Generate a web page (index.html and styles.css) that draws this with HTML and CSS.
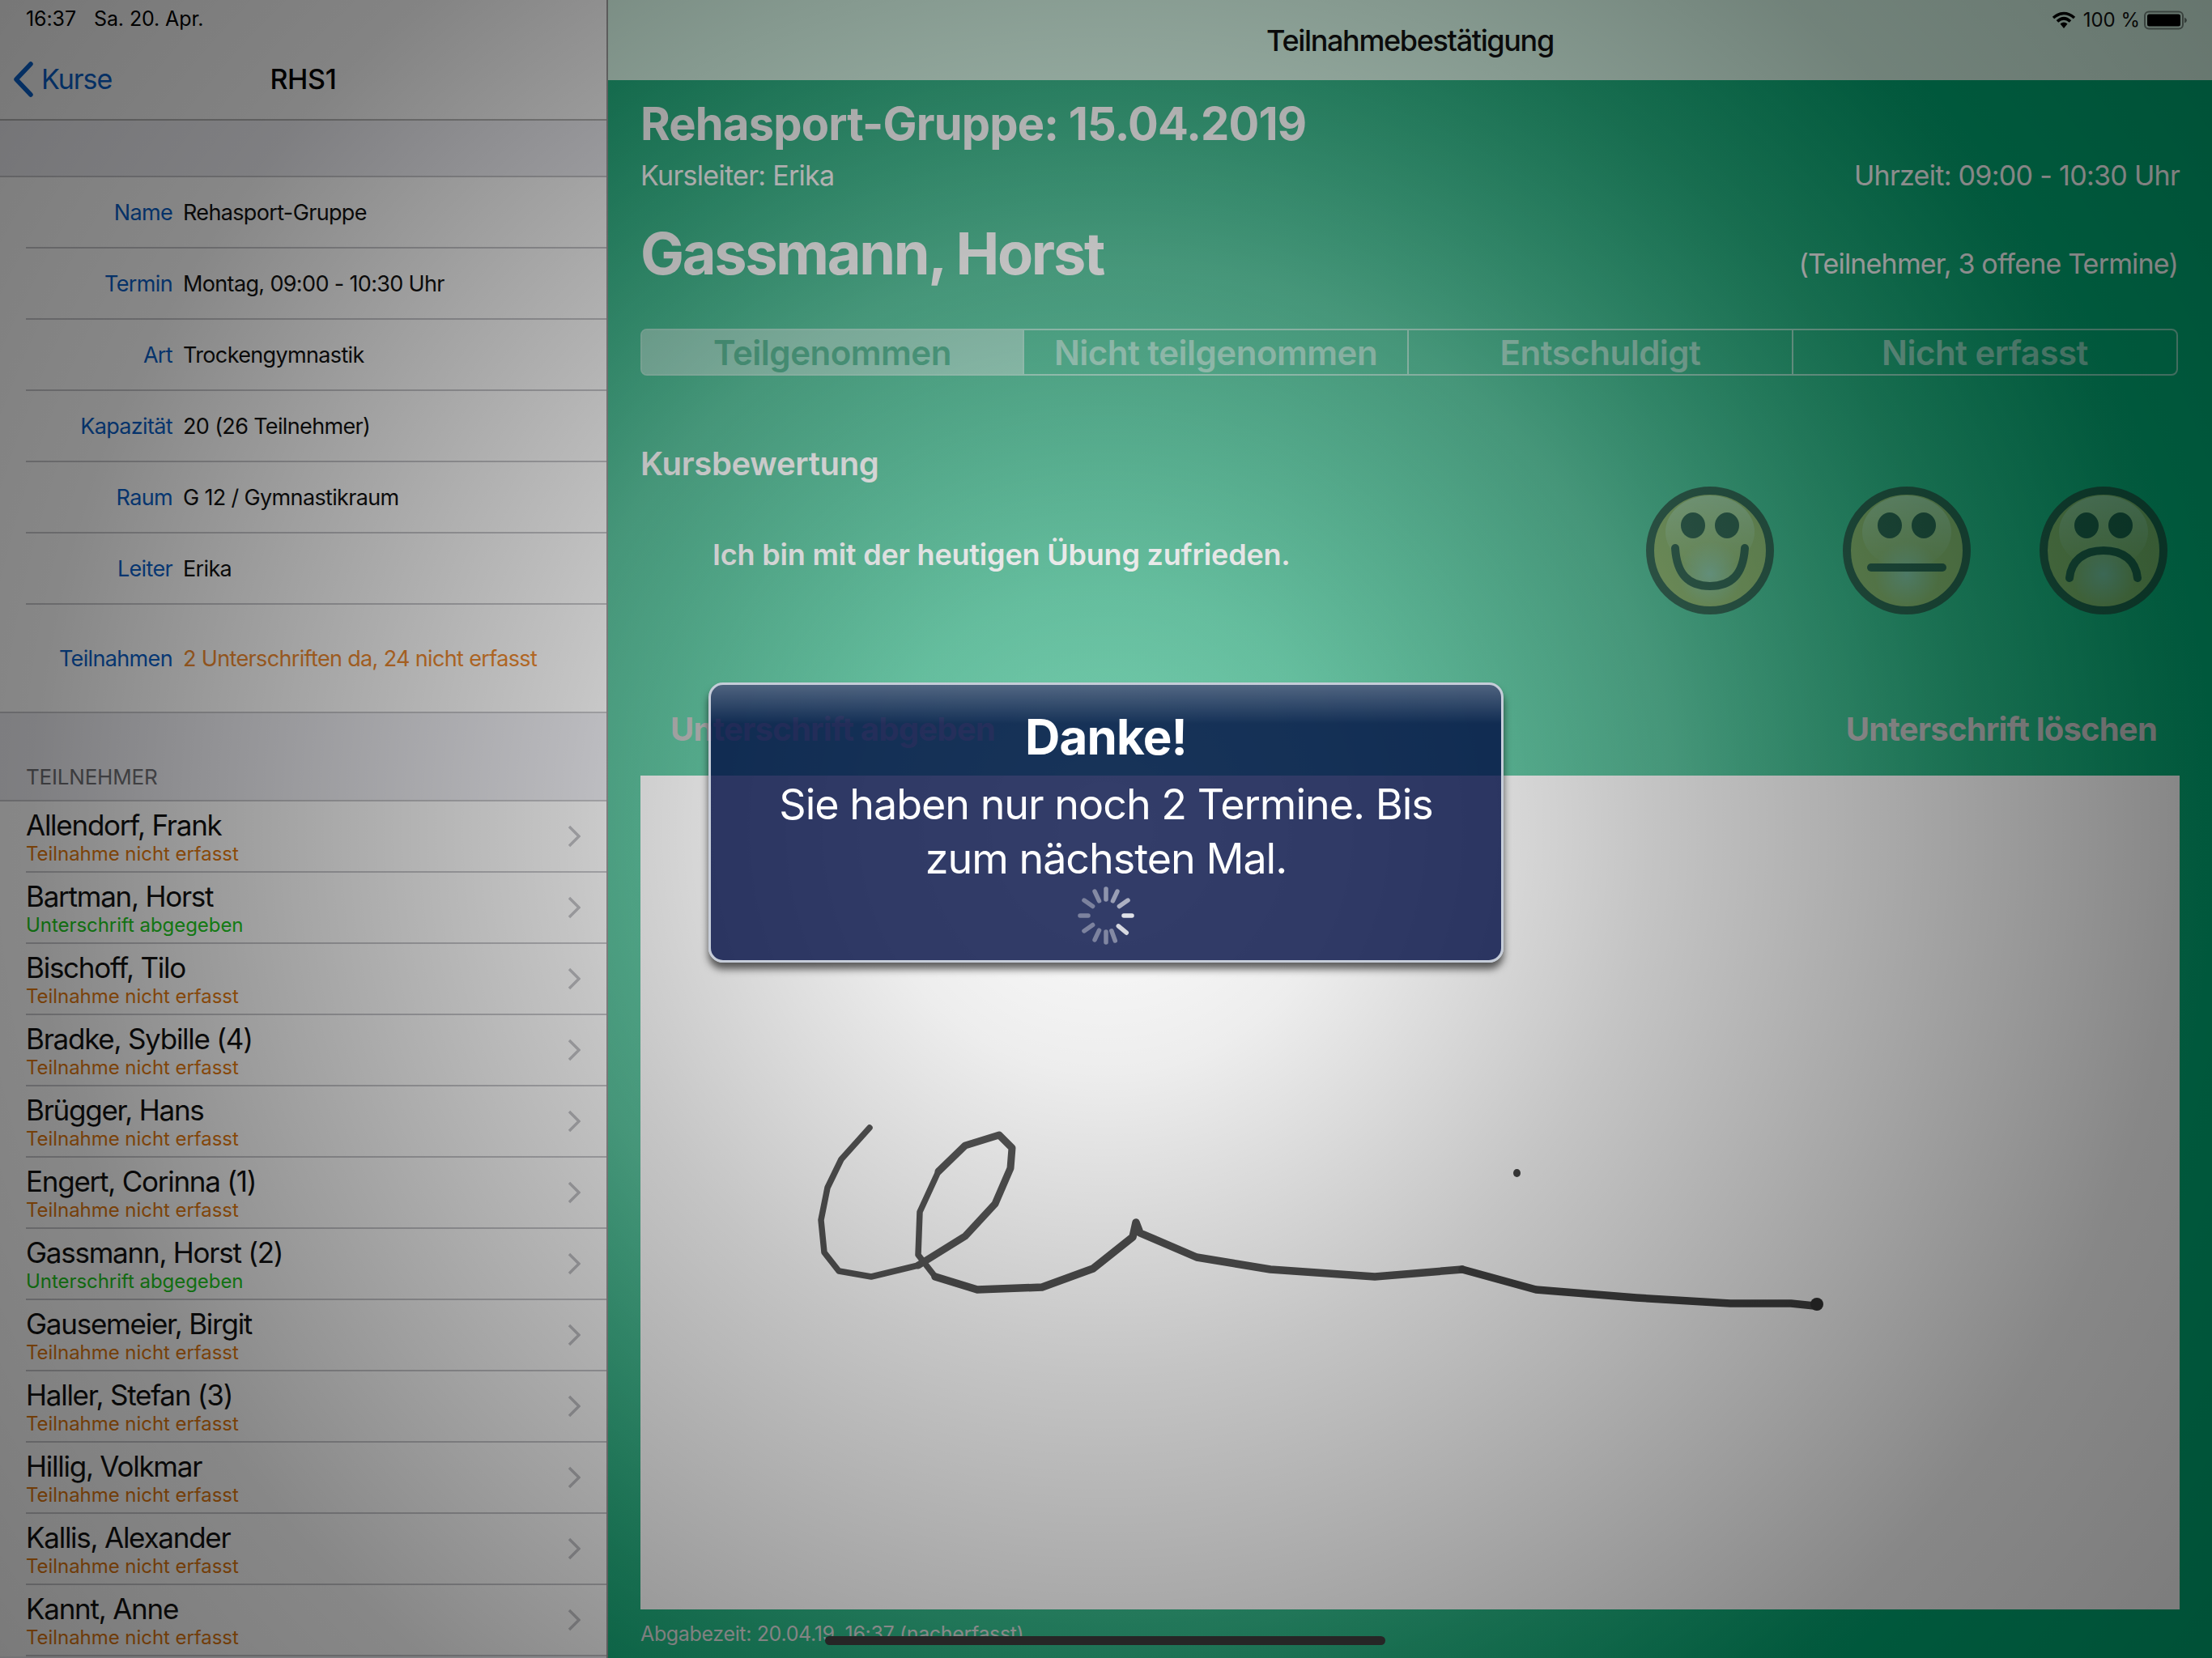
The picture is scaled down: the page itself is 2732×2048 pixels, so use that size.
FILE: index.html
```html
<!DOCTYPE html>
<html lang="de">
<head>
<meta charset="utf-8">
<title>Teilnahmebestätigung</title>
<link rel="stylesheet" href="styles.css">
</head>
<body>
<div class="app">
  <aside class="side">
    <div class="side-head">
      <div class="clock"><span>16:37</span><span>Sa. 20. Apr.</span></div>
      <div class="nav">
        <div class="back">
          <svg class="back-icon" width="26" height="44" viewBox="0 0 26 44"><path d="M22 3 L4 22 L22 41" fill="none" stroke="#0a60c8" stroke-width="5.5" stroke-linecap="round" stroke-linejoin="round"/></svg>
          <span>Kurse</span>
        </div>
        <div class="nav-title">RHS1</div>
      </div>
    </div>
    <div class="gap-a"></div>
    <div class="info">
      <div class="info-row"><span class="k">Name</span><span class="v">Rehasport-Gruppe</span></div>
      <div class="info-row"><span class="k">Termin</span><span class="v">Montag, 09:00 - 10:30 Uhr</span></div>
      <div class="info-row"><span class="k">Art</span><span class="v">Trockengymnastik</span></div>
      <div class="info-row"><span class="k">Kapazität</span><span class="v">20 (26 Teilnehmer)</span></div>
      <div class="info-row"><span class="k">Raum</span><span class="v">G 12 / Gymnastikraum</span></div>
      <div class="info-row"><span class="k">Leiter</span><span class="v">Erika</span></div>
      <div class="info-row tall"><span class="k">Teilnahmen</span><span class="v orange">2 Unterschriften da, 24 nicht erfasst</span></div>
    </div>
    <div class="sec-head">TEILNEHMER</div>
    <ul class="list">
      <li class="item"><div class="who"><div class="nm">Allendorf, Frank</div><div class="st o">Teilnahme nicht erfasst</div></div><svg class="chev" width="16" height="28" viewBox="0 0 16 28"><path d="M2 2 L14 14 L2 26" fill="none" stroke="#c4c4c8" stroke-width="3.4"/></svg></li>
      <li class="item"><div class="who"><div class="nm">Bartman, Horst</div><div class="st g">Unterschrift abgegeben</div></div><svg class="chev" width="16" height="28" viewBox="0 0 16 28"><path d="M2 2 L14 14 L2 26" fill="none" stroke="#c4c4c8" stroke-width="3.4"/></svg></li>
      <li class="item"><div class="who"><div class="nm">Bischoff, Tilo</div><div class="st o">Teilnahme nicht erfasst</div></div><svg class="chev" width="16" height="28" viewBox="0 0 16 28"><path d="M2 2 L14 14 L2 26" fill="none" stroke="#c4c4c8" stroke-width="3.4"/></svg></li>
      <li class="item"><div class="who"><div class="nm">Bradke, Sybille (4)</div><div class="st o">Teilnahme nicht erfasst</div></div><svg class="chev" width="16" height="28" viewBox="0 0 16 28"><path d="M2 2 L14 14 L2 26" fill="none" stroke="#c4c4c8" stroke-width="3.4"/></svg></li>
      <li class="item"><div class="who"><div class="nm">Brügger, Hans</div><div class="st o">Teilnahme nicht erfasst</div></div><svg class="chev" width="16" height="28" viewBox="0 0 16 28"><path d="M2 2 L14 14 L2 26" fill="none" stroke="#c4c4c8" stroke-width="3.4"/></svg></li>
      <li class="item"><div class="who"><div class="nm">Engert, Corinna (1)</div><div class="st o">Teilnahme nicht erfasst</div></div><svg class="chev" width="16" height="28" viewBox="0 0 16 28"><path d="M2 2 L14 14 L2 26" fill="none" stroke="#c4c4c8" stroke-width="3.4"/></svg></li>
      <li class="item"><div class="who"><div class="nm">Gassmann, Horst (2)</div><div class="st g">Unterschrift abgegeben</div></div><svg class="chev" width="16" height="28" viewBox="0 0 16 28"><path d="M2 2 L14 14 L2 26" fill="none" stroke="#c4c4c8" stroke-width="3.4"/></svg></li>
      <li class="item"><div class="who"><div class="nm">Gausemeier, Birgit</div><div class="st o">Teilnahme nicht erfasst</div></div><svg class="chev" width="16" height="28" viewBox="0 0 16 28"><path d="M2 2 L14 14 L2 26" fill="none" stroke="#c4c4c8" stroke-width="3.4"/></svg></li>
      <li class="item"><div class="who"><div class="nm">Haller, Stefan (3)</div><div class="st o">Teilnahme nicht erfasst</div></div><svg class="chev" width="16" height="28" viewBox="0 0 16 28"><path d="M2 2 L14 14 L2 26" fill="none" stroke="#c4c4c8" stroke-width="3.4"/></svg></li>
      <li class="item"><div class="who"><div class="nm">Hillig, Volkmar</div><div class="st o">Teilnahme nicht erfasst</div></div><svg class="chev" width="16" height="28" viewBox="0 0 16 28"><path d="M2 2 L14 14 L2 26" fill="none" stroke="#c4c4c8" stroke-width="3.4"/></svg></li>
      <li class="item"><div class="who"><div class="nm">Kallis, Alexander</div><div class="st o">Teilnahme nicht erfasst</div></div><svg class="chev" width="16" height="28" viewBox="0 0 16 28"><path d="M2 2 L14 14 L2 26" fill="none" stroke="#c4c4c8" stroke-width="3.4"/></svg></li>
      <li class="item"><div class="who"><div class="nm">Kannt, Anne</div><div class="st o">Teilnahme nicht erfasst</div></div><svg class="chev" width="16" height="28" viewBox="0 0 16 28"><path d="M2 2 L14 14 L2 26" fill="none" stroke="#c4c4c8" stroke-width="3.4"/></svg></li>
    </ul>
  </aside>

  <main class="main">
    <header class="top">
      <div class="top-title">Teilnahmebestätigung</div>
      <div class="status">
        <svg width="30" height="22" viewBox="0 0 30 22"><g fill="none" stroke="#000" stroke-width="3.6"><path d="M2 8 Q15 -3 28 8"/><path d="M7 12.5 Q15 5 23 12.5"/></g><path d="M10.5 15.5 Q15 11.5 19.5 15.5 L15 21 Z" fill="#000"/></svg>
        <span class="pct">100 %</span>
        <svg width="54" height="24" viewBox="0 0 54 24"><rect x="1" y="1.5" width="47" height="21" rx="5" fill="none" stroke="#000" stroke-opacity=".45" stroke-width="2"/><rect x="4" y="4.5" width="41" height="15" rx="2.5" fill="#000"/><path d="M50 8.5 Q53 10 53 12 Q53 14 50 15.5 Z" fill="#000" fill-opacity=".5"/></svg>
      </div>
    </header>

    <section class="body">
      <h1 class="course">Rehasport-Gruppe: 15.04.2019</h1>
      <div class="line-two"><span>Kursleiter: Erika</span><span>Uhrzeit: 09:00 - 10:30 Uhr</span></div>
      <div class="person-row"><h2 class="person">Gassmann, Horst</h2><span class="person-note">(Teilnehmer, 3 offene Termine)</span></div>

      <div class="seg">
        <div class="seg-item on">Teilgenommen</div>
        <div class="seg-item">Nicht teilgenommen</div>
        <div class="seg-item">Entschuldigt</div>
        <div class="seg-item">Nicht erfasst</div>
      </div>

      <h3 class="rate-head">Kursbewertung</h3>
      <div class="rate-row">
        <div class="rate-text">Ich bin mit der heutigen Übung zufrieden.</div>
        <div class="faces">
          <svg class="face" width="158" height="158" viewBox="0 0 158 158">
            <defs>
              <radialGradient id="low" cx=".5" cy=".5" r=".5"><stop offset="0" stop-color="#b9d8e4" stop-opacity=".7"/><stop offset="1" stop-color="#b9d8e4" stop-opacity="0"/></radialGradient>
              <linearGradient id="gloss" x1="0" y1="0" x2="0" y2="1"><stop offset="0" stop-color="#fff" stop-opacity=".5"/><stop offset="1" stop-color="#fff" stop-opacity="0"/></linearGradient>
            </defs>
            <circle cx="79" cy="79" r="74" fill="#bfae55" stroke="#222" stroke-width="10"/>
            <circle cx="79" cy="108" r="40" fill="url(#low)"/>
            <ellipse cx="79" cy="56" rx="55" ry="45" fill="url(#gloss)"/>
            <ellipse cx="58" cy="48" rx="15" ry="16" fill="#222"/><ellipse cx="100" cy="48" rx="15" ry="16" fill="#222"/>
            <path d="M36 76 C38 108 52 123 79 123 C106 123 120 108 122 76" fill="none" stroke="#222" stroke-width="10" stroke-linecap="round"/>
          </svg>
          <svg class="face" width="158" height="158" viewBox="0 0 158 158">
            <circle cx="79" cy="79" r="74" fill="#bfae55" stroke="#222" stroke-width="10"/>
            <circle cx="79" cy="108" r="40" fill="url(#low)"/>
            <ellipse cx="79" cy="56" rx="55" ry="45" fill="url(#gloss)"/>
            <ellipse cx="58" cy="48" rx="15" ry="16" fill="#222"/><ellipse cx="100" cy="48" rx="15" ry="16" fill="#222"/>
            <path d="M35 100 H123" fill="none" stroke="#222" stroke-width="10" stroke-linecap="round"/>
          </svg>
          <svg class="face" width="158" height="158" viewBox="0 0 158 158">
            <circle cx="79" cy="79" r="74" fill="#bfae55" stroke="#222" stroke-width="10"/>
            <circle cx="79" cy="108" r="40" fill="url(#low)"/>
            <ellipse cx="79" cy="56" rx="55" ry="45" fill="url(#gloss)"/>
            <ellipse cx="58" cy="48" rx="15" ry="16" fill="#222"/><ellipse cx="100" cy="48" rx="15" ry="16" fill="#222"/>
            <path d="M37 113 C39 92 54 79 79 79 C104 79 119 92 121 113" fill="none" stroke="#222" stroke-width="10" stroke-linecap="round"/>
          </svg>
        </div>
      </div>

      <div class="sig-head"><span>Unterschrift abgeben</span><span>Unterschrift löschen</span></div>
      <div class="canvas">
        <svg class="sig" width="1901" height="1030" viewBox="0 0 1901 1030">
          <g fill="none" stroke-linecap="round" stroke-linejoin="round">
            <polyline stroke="#555" stroke-width="7.5" points="283,435 248,474 231,509 223,549 227,589 245,612 285,619 343,605"/>
            <polyline stroke="#555" stroke-width="9" points="343,605 401,569 438,529 457,485 459,460 443,444 401,457 368,489"/>
            <polyline stroke="#555" stroke-width="7.5" points="368,489 345,539 343,592 364,619"/>
            <polyline stroke="#505050" stroke-width="9.5" points="364,619 416,635 496,632 559,609 608,570 612,552 617,565 687,595 778,610 907,619 1015,610"/>
            <polyline stroke="#444" stroke-width="9.5" points="1015,610 1106,635 1230,645 1346,652 1421,652 1450,655"/>
          </g>
          <ellipse cx="1082.5" cy="491" rx="4.5" ry="5" fill="#444"/>
          <ellipse cx="1453" cy="653" rx="8" ry="8" fill="#333"/>
        </svg>
      </div>
      <div class="stamp">Abgabezeit: 20.04.19, 16:37 (nacherfasst)</div>
    </section>
  </main>
</div>

<div class="dim"></div>

<div class="hud">
  <div class="hud-title">Danke!</div>
  <div class="hud-text">Sie haben nur noch 2 Termine. Bis<br>zum nächsten Mal.</div>
  <svg class="spin" width="72" height="72" viewBox="-36 -36 72 72">
    <g stroke="#fff" stroke-width="5.5" stroke-linecap="round">
      <line x1="22" y1="0" x2="32" y2="0" opacity=".85" transform="rotate(0)"/>
      <line x1="20" y1="0" x2="33" y2="0" opacity=".8" transform="rotate(40)"/>
      <line x1="20" y1="0" x2="33" y2="0" opacity=".4" transform="rotate(70)"/>
      <line x1="20" y1="0" x2="33" y2="0" opacity=".38" transform="rotate(90)"/>
      <line x1="20" y1="0" x2="33" y2="0" opacity=".36" transform="rotate(115)"/>
      <line x1="20" y1="0" x2="33" y2="0" opacity=".36" transform="rotate(145)"/>
      <line x1="22" y1="0" x2="32" y2="0" opacity=".36" transform="rotate(180)"/>
      <line x1="20" y1="0" x2="33" y2="0" opacity=".36" transform="rotate(215)"/>
      <line x1="20" y1="0" x2="33" y2="0" opacity=".4" transform="rotate(245)"/>
      <line x1="20" y1="0" x2="33" y2="0" opacity=".45" transform="rotate(270)"/>
      <line x1="20" y1="0" x2="33" y2="0" opacity=".5" transform="rotate(295)"/>
      <line x1="20" y1="0" x2="33" y2="0" opacity=".6" transform="rotate(325)"/>
    </g>
  </svg>
</div>

<div class="home"></div>
</body>
</html>
```

FILE: styles.css
```css
* { box-sizing: border-box; }
html, body { margin: 0; padding: 0; width: 2732px; height: 2048px; overflow: hidden; }
body { font-family: Inter, "Liberation Sans", sans-serif; background: #fff; position: relative; color: #000; }
h1, h2, h3 { margin: 0; }

.app { display: flex; width: 2732px; height: 2048px; }

/* sidebar */
.side { width: 751px; height: 2048px; flex: none; background: #efeff4; border-right: 2px solid #9c9c9c; overflow: hidden; }
.side-head { height: 149px; background: #f8f8f8; border-bottom: 2px solid #b4b4b4; display: flex; flex-direction: column; }
.clock { height: 46px; padding: 8px 0 0 32px; display: flex; gap: 22px; font-size: 25px; letter-spacing: -0.1px; line-height: 30px; }
.nav { height: 101px; display: flex; align-items: center; padding: 2px 0 0 16px; position: relative; }
.back { display: flex; align-items: center; gap: 9px; color: #0a60c8; font-size: 34px; letter-spacing: -1px; }
.nav-title { position: absolute; left: 0; right: 0; top: 32px; line-height: 40px; text-align: center; font-size: 34px; font-weight: 500; letter-spacing: -0.3px; }
.gap-a { height: 68px; }
.info { background: #fff; border-top: 2px solid #c8c8cc; border-bottom: 2px solid #c8c8cc; }
.info-row { height: 88px; display: flex; align-items: center; margin-left: 32px; border-bottom: 2px solid #c8c8cc; font-size: 27px; letter-spacing: -0.65px; }
.info-row.tall { height: 132px; border-bottom: 0; }
.k { width: 181px; text-align: right; color: #0a60c8; flex: none; }
.v { margin-left: 13px; color: #111; white-space: nowrap; }
.v.orange { color: #ee8a30; }
.sec-head { height: 107px; padding: 0 32px 13px; display: flex; align-items: flex-end; font-size: 26px; letter-spacing: -0.2px; color: #6d6d72; }
.list { list-style: none; margin: 0; padding: 0; background: #fff; border-top: 2px solid #c8c8cc; }
.item { height: 88px; margin-left: 32px; padding: 0 32px 0 0; display: flex; align-items: center; justify-content: space-between; border-bottom: 2px solid #c8c8cc; }
.who { height: 86px; }
.nm { margin-top: 9px; font-size: 35px; line-height: 40px; letter-spacing: -1.25px; color: #111; }
.st { font-size: 24px; line-height: 31px; letter-spacing: -0.05px; }
.st.o { color: #e07810; }
.st.g { color: #20c820; }
.chev { flex: none; }

/* main */
.main { flex: 1; height: 2048px; display: flex; flex-direction: column; background: radial-gradient(circle at 1366px 1024px, #78cfb0 0, #5cc6a0 700px, #26b080 1080px, #00a872 1370px) fixed; }
.top { height: 99px; flex: none; background: #d6f6e6; position: relative; display: flex; justify-content: center; }
.top-title { font-size: 36px; font-weight: 500; letter-spacing: -1.35px; line-height: 100px; color: #111; }
.status { position: absolute; right: 30px; top: 10px; display: flex; align-items: center; gap: 9px; font-size: 24px; }
.pct { color: #111; margin-right: -4px; }
.body { flex: 1; padding: 20px 40px 0; color: #fff; }
.course { font-size: 56px; font-weight: 700; line-height: 68px; letter-spacing: -0.8px; }
.line-two { display: flex; justify-content: space-between; height: 58px; align-items: center; font-size: 34px; letter-spacing: -0.7px; color: #fff; }
.person-row { display: flex; justify-content: space-between; align-items: center; margin-top: 24px; height: 88px; }
.person { font-size: 72px; font-weight: 700; letter-spacing: -2.3px; line-height: 88px; }
.person-note { font-size: 34px; letter-spacing: -0.82px; padding: 24px 2px 0 0; }
.seg { display: flex; margin-top: 49px; height: 58px; width: 1899px; border: 2px solid rgba(255,255,255,.5); border-radius: 8px; overflow: hidden; }
.seg-item { flex: 1; text-align: center; font-size: 42px; font-weight: 600; line-height: 55px; color: rgba(255,255,255,.5); border-left: 2px solid rgba(255,255,255,.5); letter-spacing: -0.5px; }
.seg-item.on { flex: 0 0 470px; border-left: 0; background: rgba(255,255,255,.42); color: #5ab795; }
.rate-head { margin-top: 81px; font-size: 40px; font-weight: 600; line-height: 56px; letter-spacing: -0.3px; }
.rate-row { display: flex; justify-content: space-between; align-items: center; height: 158px; padding-left: 89px; }
.rate-text { font-size: 36px; font-weight: 600; letter-spacing: -0.2px; padding-top: 10px; }
.faces { display: flex; gap: 85px; margin-right: 15px; }
.face { opacity: .54; display: block; }
.sig-head { display: flex; justify-content: space-between; align-items: center; height: 88px; margin-top: 111px; padding: 0 28px 28px 37px; font-size: 40px; font-weight: 700; letter-spacing: -0.8px; color: #c2c2c2; }
.canvas { height: 1030px; width: 1901px; background: #fff; }
.sig { display: block; }
.stamp { font-size: 25px; line-height: 60px; letter-spacing: -0.35px; color: #d4d4d4; }

/* overlay */
.dim { position: absolute; inset: 0; background: radial-gradient(circle at 1366px 1024px, rgba(0,0,0,0) 0, rgba(0,0,0,.07) 300px, rgba(0,0,0,.23) 670px, rgba(0,0,0,.47) 1326px, rgba(0,0,0,.52) 1707px); }

.hud { position: absolute; left: 875px; top: 843px; width: 982px; height: 346px; border: 3px solid #c6cdd9; border-radius: 18px; background: linear-gradient(rgba(255,255,255,.26), rgba(255,255,255,0) 48px), rgba(0,12,68,.8); box-shadow: 0 8px 10px rgba(0,0,0,.6); display: flex; flex-direction: column; align-items: center; color: #fff; text-align: center; }
.hud-title { font-size: 60px; font-weight: 700; line-height: 70px; margin-top: 29px; letter-spacing: -0.8px; }
.hud-text { font-size: 52px; line-height: 67px; margin-top: 15px; letter-spacing: -1px; }
.spin { margin-top: 1px; }

.home { position: absolute; left: 1019px; top: 2021px; width: 692px; height: 11px; border-radius: 6px; background: #262626; }
```
